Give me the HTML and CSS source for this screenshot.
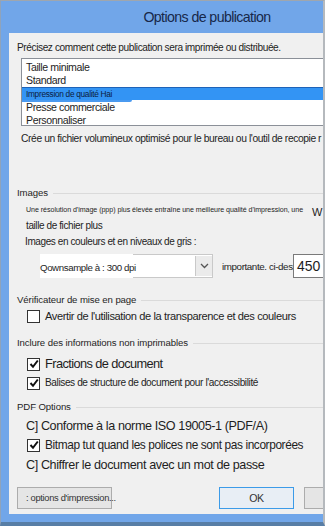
FILE: index.html
```
<!DOCTYPE html>
<html lang="fr">
<head>
    <meta charset="UTF-8">
    <meta name="viewport" content="width=device-width, initial-scale=1.0">
    <title>Options de publication</title>
    <link rel="stylesheet" href="styles.css">
</head>
<body>
    <div class="window">
        <div class="titlebar">
            <h1>Options de publication</h1>
        </div>

        <div class="panel">
            <p class="intro">Précisez comment cette publication sera imprimée ou distribuée.</p>

            <div class="listbox">
                <div class="item">Taille minimale</div>
                <div class="item">Standard</div>
                <div class="item selected">Impression de qualité Hai</div>
                <div class="item">Presse commerciale</div>
                <div class="item">Personnaliser</div>
            </div>

            <div class="desc">
                <span>Crée un fichier volumineux optimisé pour le bureau ou l'outil de recopie</span>
                <span class="cut">r</span>
            </div>

            <div class="group images-group">Images</div>
            <div class="tiny-row">
                <span class="tiny">Une résolution d'image (ppp) plus élevée entraîne une meilleure qualité d'impression, une</span>
                <span class="cut-w">W</span>
            </div>
            <p class="size-note">taille de fichier plus</p>
            <p class="sub-label">Images en couleurs et en niveaux de gris :</p>

            <div class="sample-row">
                <div class="sample-field">
                    <span class="sample-text">Qownsample à : 300 dpi</span>
                    <div class="combo">
                        <span class="combo-btn">
                            <svg width="9" height="6" viewBox="0 0 9 6"><path d="M1 1 L4.5 4.5 L8 1" fill="none" stroke="#555" stroke-width="1.3"/></svg>
                        </span>
                    </div>
                </div>
                <span class="important">importante. ci-dessous</span>
                <div class="num-box">450 d</div>
            </div>

            <div class="group layout-group">Vérificateur de mise en page</div>
            <label class="check big">
                <span class="box"></span>
                <span class="label">Avertir de l'utilisation de la transparence et des couleurs</span>
            </label>

            <div class="group info-group">Inclure des informations non imprimables</div>
            <label class="check huge">
                <span class="box"><svg width="10" height="10" viewBox="0 0 10 10"><path d="M1.5 5 L4 7.8 L8.8 1.5" fill="none" stroke="#111" stroke-width="2"/></svg></span>
                <span class="label">Fractions de document</span>
            </label>
            <label class="check small">
                <span class="box"><svg width="10" height="10" viewBox="0 0 10 10"><path d="M1.5 5 L4 7.8 L8.8 1.5" fill="none" stroke="#111" stroke-width="2"/></svg></span>
                <span class="label">Balises de structure de document pour l'accessibilité</span>
            </label>

            <div class="group pdf-group">PDF Options</div>
            <p class="option">C] Conforme à la norme ISO 19005-1 (PDF/A)</p>
            <label class="check mid">
                <span class="box"><svg width="10" height="10" viewBox="0 0 10 10"><path d="M1.5 5 L4 7.8 L8.8 1.5" fill="none" stroke="#111" stroke-width="2"/></svg></span>
                <span class="label">Bitmap tut quand les polices ne sont pas incorporées</span>
            </label>
            <p class="option">C] Chiffrer le document avec un mot de passe</p>

            <div class="buttons">
                <button class="btn print">: options d'impression...</button>
                <button class="btn ok">OK</button>
                <button class="btn cancel">Annuler</button>
            </div>
        </div>
    </div>
</body>
</html>
```

FILE: styles.css
```
body {
    margin: 0;
    padding: 0;
    font-family: "Liberation Sans", Arial, sans-serif;
    letter-spacing: -0.4px;
    color: #1e1e1e;
    overflow: hidden;
}

.window {
    width: 322px;
    height: 521px;
    background: #71a6e9;
    border-top: 1px solid #9fa6ae;
    border-left: 1px solid #8fa3bb;
    border-right: 2px solid #b5b9bd;
    border-bottom: 4px solid #587ea6;
    display: flex;
    flex-direction: column;
}

.titlebar {
    height: 32px;
    display: flex;
    align-items: center;
    justify-content: center;
    padding-left: 90px;
}

.titlebar h1 {
    margin: 0;
    font-size: 14.2px;
    letter-spacing: -0.6px;
    font-weight: normal;
    color: #17284a;
}

.panel {
    flex: 1;
    margin: 0 0 8px 8px;
    background: #f0f0f0;
    padding-left: 8px;
    display: flex;
    flex-direction: column;
    overflow: hidden;
}

p {
    margin: 0;
}

.intro {
    margin-top: 9px;
    font-size: 10.1px;
    line-height: 12px;
    white-space: nowrap;
}

.listbox {
    margin: 4px 0 0 4px;
    background: #fff;
    border: 1px solid #8b9098;
    border-right: none;
    padding-top: 2px;
    box-sizing: border-box;
    height: 68px;
}

.item {
    height: 13px;
    line-height: 13px;
    font-size: 10.6px;
    padding-left: 4px;
}

.item.selected {
    position: relative;
    background: #3394f4;
    border-top: 1px solid #1e63b8;
    height: 12px;
    line-height: 12px;
    font-size: 8.3px;
    letter-spacing: -0.3px;
    color: #0c1c40;
    margin-bottom: 1px;
}

.item.selected::after {
    content: "";
    position: absolute;
    left: 0;
    top: 12px;
    width: 110px;
    height: 2px;
    background: #4a9af0;
    border-radius: 0 0 40px 0;
}

.desc {
    margin: 7px 0 0 4px;
    display: flex;
    justify-content: space-between;
    font-size: 10.3px;
    line-height: 12px;
    white-space: nowrap;
}

.cut {
    padding-right: 2px;
}

.group {
    display: flex;
    align-items: center;
    gap: 5px;
    font-size: 9.6px;
    letter-spacing: -0.1px;
    line-height: 12px;
    margin-top: 12px;
    white-space: nowrap;
}

.group::after {
    content: "";
    flex: 1;
    border-top: 1px solid #dadada;
}

.images-group {
    margin-top: 42px;
}

.layout-group {
    margin-top: 16px;
}

.info-group {
    margin-top: 14px;
}

.pdf-group {
    margin-top: 11px;
}

.tiny-row {
    margin: 5px 0 0 9px;
    display: flex;
    justify-content: space-between;
    align-items: center;
    height: 12px;
    white-space: nowrap;
}

.tiny {
    font-size: 7.1px;
    letter-spacing: -0.05px;
}

.cut-w {
    font-size: 11px;
    padding-top: 3px;
    padding-right: 1px;
}

.size-note {
    margin: 4px 0 0 9px;
    font-size: 10px;
    line-height: 12px;
}

.sub-label {
    margin: 4px 0 0 8px;
    font-size: 10px;
    line-height: 12px;
    white-space: nowrap;
}

.sample-row {
    margin-top: 5px;
    display: flex;
    align-items: center;
    height: 25px;
}

.sample-field {
    margin-left: 23px;
    width: 173px;
    height: 24px;
    background: #fff;
    display: flex;
    align-items: center;
    flex-shrink: 0;
}

.sample-text {
    width: 93px;
    font-size: 9.7px;
    padding-top: 4px;
    white-space: nowrap;
}

.combo {
    width: 79px;
    height: 22px;
    border: 1px solid #c9c9c9;
    border-left: none;
    display: flex;
    justify-content: flex-end;
}

.combo-btn {
    width: 16px;
    height: 20px;
    margin: 1px 0;
    border-left: 1px solid #c9c9c9;
    background: #ebebeb;
    display: flex;
    align-items: center;
    justify-content: center;
}

.important {
    margin-left: 9px;
    font-size: 9.8px;
    padding-top: 2px;
    white-space: nowrap;
    width: 71px;
    overflow: hidden;
    flex-shrink: 0;
}

.num-box {
    height: 22px;
    padding-left: 3px;
    flex: 1;
    background: #fff;
    border: 1px solid #7a7a7a;
    border-right: none;
    font-size: 14px;
    letter-spacing: 0;
    line-height: 22px;
    white-space: nowrap;
    overflow: hidden;
}

.check {
    display: flex;
    align-items: center;
    gap: 5px;
    margin-left: 10px;
    line-height: 14px;
    white-space: nowrap;
}

.box {
    width: 11px;
    height: 11px;
    border: 1px solid #333;
    background: #fff;
    display: flex;
    align-items: center;
    justify-content: center;
    flex-shrink: 0;
}

.check.big {
    margin-top: 3px;
    font-size: 11.1px;
}

.check.huge {
    margin-top: 7px;
    font-size: 12.8px;
    letter-spacing: -0.6px;
    line-height: 16px;
}

.check.small {
    margin-top: 4px;
    font-size: 10.1px;
}

.check.mid {
    margin-top: 4px;
    font-size: 11.9px;
    line-height: 14px;
}

.option {
    margin: 6px 0 0 9px;
    font-size: 12.6px;
    line-height: 15px;
    white-space: nowrap;
}

.buttons {
    margin-top: 14px;
    display: flex;
    align-items: center;
}

.btn {
    height: 22px;
    background: #e5e5e5;
    border: 1px solid #acacac;
    font-family: inherit;
    font-size: 9.3px;
    letter-spacing: -0.3px;
    color: #333;
    padding: 0;
    flex-shrink: 0;
    white-space: nowrap;
}

.print {
    width: 95px;
    text-align: left;
    padding-left: 8px;
    overflow: visible;
}

.ok {
    margin-left: 107px;
    width: 75px;
    border-color: #3c9be8;
    background: #e8eef5;
    font-size: 10.6px;
}

.cancel {
    margin-left: 10px;
    width: 75px;
}
```
